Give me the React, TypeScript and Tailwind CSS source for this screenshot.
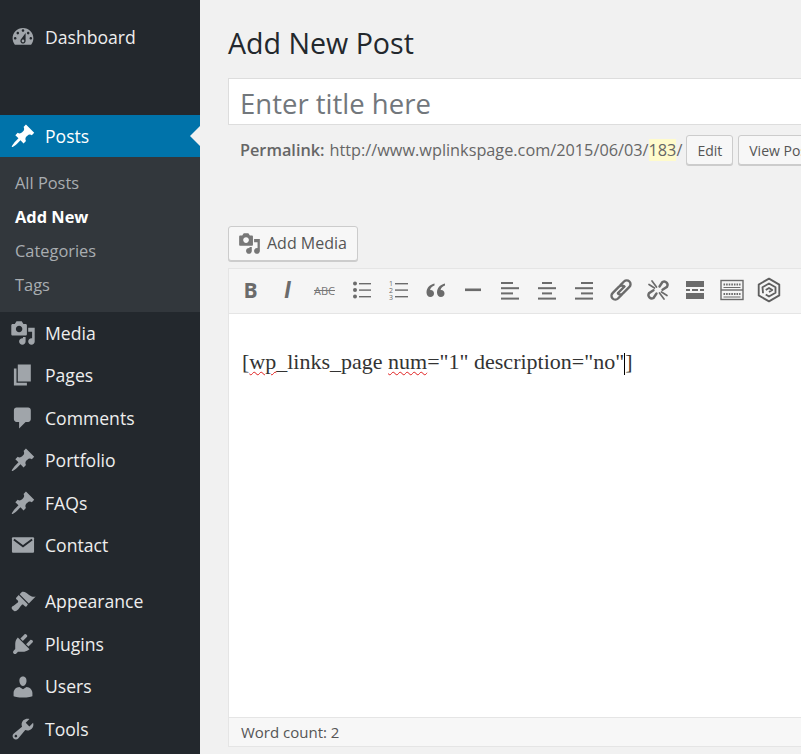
import React from "react";

const P: Record<string, string> = {
  dashboard: "M3.76 16h12.48c1.1-1.37 1.76-3.11 1.76-5 0-4.42-3.58-8-8-8s-8 3.58-8 8c0 1.89.66 3.63 1.76 5zM10 4c.55 0 1 .45 1 1s-.45 1-1 1-1-.45-1-1 .45-1 1-1zM6 6c.55 0 1 .45 1 1s-.45 1-1 1-1-.45-1-1 .45-1 1-1zm8 0c.55 0 1 .45 1 1s-.45 1-1 1-1-.45-1-1 .45-1 1-1zm-5.37 5.55L12 7v6c0 1.1-.9 2-2 2s-2-.9-2-2c0-.57.24-1.08.63-1.45zM4 10c.55 0 1 .45 1 1s-.45 1-1 1-1-.45-1-1 .45-1 1-1zm12 0c.55 0 1 .45 1 1s-.45 1-1 1-1-.45-1-1 .45-1 1-1zm-5 3c0-.55-.45-1-1-1s-1 .45-1 1 .45 1 1 1 1-.45 1-1z",
  pin: "M10.44 3.02l1.82-1.82 6.36 6.35-1.83 1.82c-1.05-.68-2.48-.57-3.41.36l-.75.75c-.92.93-1.04 2.35-.35 3.41l-1.83 1.82-2.41-2.41-2.8 2.79c-.42.42-3.38 2.71-3.8 2.29s1.86-3.39 2.28-3.81l2.79-2.79L4.1 9.36l1.83-1.82c1.05.69 2.48.57 3.41-.36l.75-.75c.93-.92 1.04-2.35.35-3.41z",
  media: "M13 11V4c0-.55-.45-1-1-1h-1.67L9 1H5L3.67 3H2c-.55 0-1 .45-1 1v7c0 .55.45 1 1 1h10c.55 0 1-.45 1-1zM7 4.5c1.38 0 2.5 1.12 2.5 2.5S8.38 9.5 7 9.5 4.5 8.38 4.5 7 5.62 4.5 7 4.5zM14 6h5v10.5c0 1.38-1.12 2.5-2.5 2.5S14 17.88 14 16.5s1.12-2.5 2.5-2.5c.17 0 .34.02.5.05V9h-3V6zm-4 8.05V13h2v3.5c0 1.38-1.12 2.5-2.5 2.5S7 17.88 7 16.5 8.12 14 9.5 14c.17 0 .34.02.5.05z",
  pages: "M6 15V2h10v13H6zm-1 1h8v2H3V5h2v11z",
  comments: "M5 2h9c1.1 0 2 .9 2 2v7c0 1.1-.9 2-2 2h-2l-5 5v-5H5c-1.1 0-2-.9-2-2V4c0-1.1.9-2 2-2z",
  appearance: "M14.48 11.06L7.41 3.99l1.5-1.5c.5-.56 2.3-.47 3.51.32 1.21.8 1.43 1.28 2.91 2.1 1.18.64 2.45 1.26 4.45.85zm-.71.71L6.7 4.7 4.93 6.47c-.39.39-.39 1.02 0 1.41l1.06 1.06c.39.39.39 1.03 0 1.42-.6.6-1.43 1.11-2.21 1.69-.35.26-.7.53-1.01.84C1.43 13.23.99 14.3 1.4 15.1c.41.8 1.04 1.35 1.83 1.77.81.42 1.88-.01 3.22-1.36.31-.31.58-.66.85-1.02.57-.78 1.08-1.61 1.69-2.21.39-.39 1.02-.39 1.41 0l1.06 1.06c.39.39 1.02.39 1.41 0z",
  plugins: "M13.11 4.36L9.87 7.6 8 5.73l3.24-3.24c.35-.34 1.05-.2 1.56.32.52.51.66 1.21.31 1.55zm-8 1.77l.91-1.12 9.01 9.01-1.19.84c-.71.71-2.63 1.16-3.82 1.16H6.14L4.9 17.26c-.59.59-1.54.59-2.12 0-.59-.58-.59-1.53 0-2.12l1.24-1.24v-3.88c0-1.13.4-3.19 1.09-3.89zm7.26 3.97l3.24-3.24c.34-.35 1.04-.21 1.55.31.52.51.66 1.21.31 1.55l-3.24 3.25z",
  users: "M10 9.25c-2.27 0-2.73-3.44-2.73-3.44C7 4.02 7.82 2 9.97 2c2.16 0 2.98 2.02 2.71 3.81 0 0-.41 3.44-2.68 3.44zm0 2.57L12.72 10c2.39 0 4.52 2.33 4.52 4.53v2.49s-3.65 1.13-7.24 1.13c-3.65 0-7.24-1.13-7.24-1.13v-2.49c0-2.25 1.94-4.48 4.47-4.48z",
  tools: "M16.68 9.77c-1.34 1.34-3.3 1.67-4.95.99l-5.41 6.52c-.99.99-2.59.99-3.58 0s-.99-2.59 0-3.57l6.52-5.42c-.68-1.65-.35-3.61.99-4.95 1.28-1.28 3.12-1.62 4.72-1.06l-2.89 2.89 2.82 2.82 2.86-2.87c.53 1.58.18 3.39-1.08 4.65zM3.81 16.21c.4.39 1.04.39 1.43 0 .4-.4.4-1.04 0-1.43-.39-.4-1.03-.4-1.43 0-.39.39-.39 1.03 0 1.43z",
};

function Dash({ name, className }: { name: string; className?: string }) {
  return (
    <svg viewBox="0 0 20 20" className={className} fill="currentColor" fillRule="evenodd">
      <path d={P[name]} />
    </svg>
  );
}

function Mail({ className }: { className?: string }) {
  return (
    <svg viewBox="0 0 20 20" className={className}>
      <rect x="1.5" y="4" width="17" height="12" rx="0.8" fill="currentColor" />
      <path d="M3 5.800 10 11l7-5.200" fill="none" stroke="#23282d" strokeWidth="1.500" />
    </svg>
  );
}

function Row({ icon, label }: { icon: string; label: string }) {
  return (
    <div className="flex h-[42.5px] items-center text-[17.6px] text-[#eeeeee]">
      {icon === "mail" ? (
        <Mail className="ml-[10px] h-[26px] w-[26px] shrink-0 text-[#a0a5aa]" />
      ) : (
        <Dash name={icon} className="ml-[10px] h-[26px] w-[26px] shrink-0 text-[#a0a5aa]" />
      )}
      <span className="ml-[9px]">{label}</span>
    </div>
  );
}

function Sub({ label, active }: { label: string; active?: boolean }) {
  return (
    <div className={`flex h-[34px] items-center pl-[15px] text-[16.4px] ${active ? "font-bold text-white" : "text-[#a9adb1]"}`}>
      {label}
    </div>
  );
}

function Sidebar() {
  return (
    <aside className="h-full w-[200px] shrink-0 overflow-hidden bg-[#23282d]">
      <div className="mt-[16px]">
        <Row icon="dashboard" label="Dashboard" />
      </div>
      <div className="relative mt-[56.5px] flex h-[42px] items-center bg-[#0073aa] text-[17.6px] text-white">
        <Dash name="pin" className="ml-[10px] h-[26px] w-[26px] shrink-0" />
        <span className="ml-[9px]">Posts</span>
        <div className="absolute right-0 top-[11px] h-0 w-0 border-y-[10px] border-r-[10px] border-y-transparent border-r-[#f1f1f1]" />
      </div>
      <div className="h-[154.6px] bg-[#32373c] pt-[9px]">
        <Sub label="All Posts" />
        <Sub label="Add New" active />
        <Sub label="Categories" />
        <Sub label="Tags" />
      </div>
      <Row icon="media" label="Media" />
      <Row icon="pages" label="Pages" />
      <Row icon="comments" label="Comments" />
      <Row icon="pin" label="Portfolio" />
      <Row icon="pin" label="FAQs" />
      <Row icon="mail" label="Contact" />
      <div className="mt-[13.8px]">
        <Row icon="appearance" label="Appearance" />
        <Row icon="plugins" label="Plugins" />
        <Row icon="users" label="Users" />
        <Row icon="tools" label="Tools" />
      </div>
    </aside>
  );
}

function Btn({ children, className }: { children: React.ReactNode; className?: string }) {
  return (
    <div className={`flex shrink-0 items-center rounded-[3px] border border-[#cccccc] bg-[#f7f7f7] text-[#555555] shadow-[0_1px_0_#cccccc] ${className ?? ""}`}>
      {children}
    </div>
  );
}

const G = ({ children }: { children: React.ReactNode }) => (
  <svg viewBox="0 0 24 24" className="h-[24px] w-[24px]" fill="#6b6b6b">{children}</svg>
);

function Lines({ rows }: { rows: [number, number][] }) {
  return (
    <G>
      {rows.map(([x, w], i) => (
        <rect key={i} x={x} y={4 + i * 5.2} width={w} height="2" />
      ))}
    </G>
  );
}

function Toolbar() {
  const items: React.ReactNode[] = [
    <span className="text-[21px] font-bold leading-none text-[#6b6b6b]">B</span>,
    <span className="font-['Liberation_Sans',sans-serif] text-[23px] font-bold italic leading-none text-[#6b6b6b]">I</span>,
    <span className="text-[11px] leading-none text-[#777777] line-through">ABC</span>,
    <G>
      <circle cx="5" cy="5.500" r="2" /><circle cx="5" cy="12" r="2" /><circle cx="5" cy="18.500" r="2" />
      <rect x="9" y="5" width="12" height="1.400" /><rect x="9" y="11.400" width="12" height="1.400" /><rect x="9" y="18" width="12" height="1.400" />
    </G>,
    <G>
      <text x="2" y="8" fontSize="7" fontFamily="Open Sans">1</text>
      <text x="2" y="15" fontSize="7" fontFamily="Open Sans">2</text>
      <text x="2" y="22" fontSize="7" fontFamily="Open Sans">3</text>
      <rect x="8" y="5" width="13" height="1.400" /><rect x="8" y="11.400" width="13" height="1.400" /><rect x="8" y="18" width="13" height="1.400" />
    </G>,
    <G>
      <path d="M10.500 5.500C6 6.500 2.500 9.500 2.500 14.500c0 2.600 1.600 4.500 3.900 4.500 2.100 0 3.600-1.500 3.600-3.500s-1.400-3.400-3.300-3.400c-.3 0-.5 0-.7.100.5-2.200 2.200-3.800 4.500-4.600zM21 5.500c-4.500 1-8 4-8 9 0 2.600 1.600 4.500 3.900 4.500 2.100 0 3.600-1.500 3.600-3.500s-1.400-3.400-3.300-3.400c-.3 0-.5 0-.7.100.5-2.200 2.200-3.800 4.500-4.600z" />
    </G>,
    <G><rect x="4" y="10.500" width="16" height="2.600" /></G>,
    <Lines rows={[[3, 12], [3, 18], [3, 12], [3, 18]]} />,
    <Lines rows={[[7, 10], [3, 18], [7, 10], [3, 18]]} />,
    <Lines rows={[[9, 12], [3, 18], [9, 12], [3, 18]]} />,
    <svg viewBox="0 0 24 24" className="h-[24px] w-[24px]" fill="none" stroke="#6b6b6b" strokeWidth="2.400" strokeLinecap="round">
      <path d="M9 15 15.500 8.500" />
      <path d="M11.500 7 15 3.500a3.800 3.800 0 0 1 5.400 5.400L14 15.300a3.800 3.800 0 0 1-5 .3" />
      <path d="M12.500 17 9 20.500a3.800 3.800 0 0 1-5.400-5.400L10 8.700a3.800 3.800 0 0 1 5-.3" />
    </svg>,
    <svg viewBox="0 0 24 24" className="h-[24px] w-[24px]" fill="none" stroke="#6b6b6b" strokeWidth="2.400" strokeLinecap="round">
      <path d="M13.500 8.500 16.500 4a3.400 3.400 0 0 1 4.500 4.800l-4.500 3" />
      <path d="M10.500 15.500 7.500 20A3.400 3.400 0 0 1 3 15.200l4.500-3" />
      <path d="M6 3l4.500 6M3 6.500l5.500 3.500M18 21l-4.500-6M21 17.500 15.500 14" strokeWidth="1.700" />
    </svg>,
    <G>
      <rect x="3" y="3" width="18" height="6" />
      <rect x="3" y="11" width="4" height="2" /><rect x="9" y="11" width="6" height="2" /><rect x="17" y="11" width="4" height="2" />
      <rect x="3" y="15" width="18" height="6" />
    </G>,
    <svg viewBox="0 0 24 24" className="h-[24px] w-[24px]" fill="none" stroke="#6b6b6b">
      <rect x="1" y="2.500" width="22" height="19" strokeWidth="1.400" />
      <path d="M1 12h22" strokeWidth="1.400" />
      <path d="M3.500 6.500h17M3.500 16h17" strokeWidth="2.200" strokeDasharray="1.600 1" />
      <path d="M3.500 9.500h17M3.500 19h17" strokeWidth="1" />
    </svg>,
    <svg viewBox="0 0 24 24" className="h-[26px] w-[26px]" fill="none" stroke="#5f5f5f" strokeWidth="1.700" strokeLinejoin="round">
      <path d="M12 1.500 21.500 7v10L12 22.500 2.500 17V7z" />
      <path d="M6.500 15 6 9.500 12 6l6 3.500v5L12 18l-3-1.800" />
      <path d="M9 12l3-1.800 3 1.800-3 1.800" />
    </svg>,
  ];
  return (
    <div className="flex h-[45px] items-center border-b border-[#e5e5e5] bg-[#f5f5f5] pb-[2px] pl-[3px]">
      {items.map((it, i) => (
        <div key={i} className="flex h-[30px] w-[37px] shrink-0 items-center justify-center">{it}</div>
      ))}
    </div>
  );
}

export default function App() {
  return (
    <div className="flex h-[754px] w-[801px] overflow-hidden bg-[#f1f1f1] font-['Open_Sans',sans-serif]">
      <Sidebar />
      <main className="min-w-0 flex-1 overflow-hidden pl-[28px]">
        <div className="w-[700px]">
          <h1 className="mt-[22px] h-[42px] text-[28.6px] leading-[42px] text-[#23282d]">Add New Post</h1>
          <div className="mt-[14px] flex h-[47px] items-center border border-[#dddddd] bg-white pl-[11px] pt-[4px] text-[27.5px] text-[#72777c]">
            Enter title here
          </div>
          <div className="mt-[9px] flex h-[32px] items-center pl-[12px] text-[16.27px] text-[#666666]">
            <b className="font-semibold">Permalink:</b>
            <span className="ml-[5px]">http://www.wplinkspage.com/2015/06/03/<span className="bg-[#fffbcc]">183</span>/</span>
            <Btn className="ml-[4px] h-[30px] px-[10px] text-[14px]">Edit</Btn>
            <Btn className="ml-[5px] h-[30px] px-[10px] text-[14px]">View Post</Btn>
          </div>
          <Btn className="mt-[60px] h-[35px] w-[130px] pb-[1px] pl-[9px] text-[16px]">
            <Dash name="media" className="mr-[6px] h-[23px] w-[23px] text-[#777777]" />
            Add Media
          </Btn>
          <div className="mt-[7px] border border-[#e5e5e5] bg-white">
            <Toolbar />
            <div className="h-[403px] pl-[13px] pt-[33px] font-['Liberation_Serif',serif] text-[22px] leading-[30px] text-[#333333]">
              [<span className="underline decoration-[#e02020] decoration-wavy decoration-1 underline-offset-2">wp</span>_links_page{" "}
              <span className="underline decoration-[#e02020] decoration-wavy decoration-1 underline-offset-2">num</span>="1" description="no"
              <span className="inline-block h-[22px] w-px bg-black align-middle" />]
            </div>
            <div className="flex h-[29px] items-center border-t border-[#e5e5e5] bg-[#f7f7f7] pl-[12px] text-[15px] text-[#555555]">
              Word count: 2
            </div>
          </div>
        </div>
      </main>
    </div>
  );
}
